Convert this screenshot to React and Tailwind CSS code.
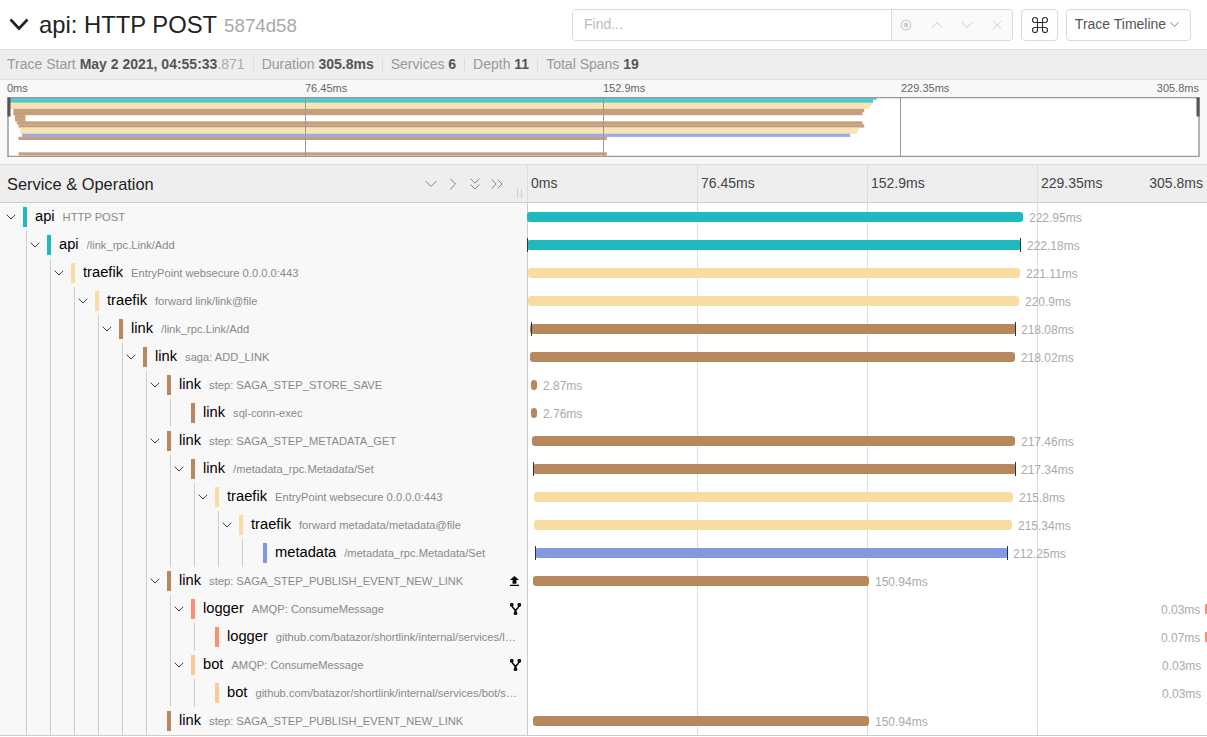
import React from 'react';
import { ChevronDown, ChevronUp, ChevronRight, ChevronsDown, ChevronsRight, Command, X } from 'lucide-react';

const TEAL = '#1fb9bf';
const BEIGE = '#f8dca1';
const BROWN = '#b7885e';
const BLUE = '#8199de';
const ORANGE = '#f99170';
const PEACH = '#fdc993';

const rows = [
  { d: 0, name: 'api', op: 'HTTP POST', color: TEAL, s: 527, e: 1023, label: '222.95ms', kids: true },
  { d: 1, name: 'api', op: '/link_rpc.Link/Add', color: TEAL, s: 527, e: 1021, label: '222.18ms', kids: true, marks: true },
  { d: 2, name: 'traefik', op: 'EntryPoint websecure 0.0.0.0:443', color: BEIGE, s: 528, e: 1020, label: '221.11ms', kids: true },
  { d: 3, name: 'traefik', op: 'forward link/link@file', color: BEIGE, s: 528, e: 1019, label: '220.9ms', kids: true },
  { d: 4, name: 'link', op: '/link_rpc.Link/Add', color: BROWN, s: 530, e: 1016, label: '218.08ms', kids: true, marks: true, inset: true, tight: true },
  { d: 5, name: 'link', op: 'saga: ADD_LINK', color: BROWN, s: 530, e: 1015, label: '218.02ms', kids: true },
  { d: 6, name: 'link', op: 'step: SAGA_STEP_STORE_SAVE', color: BROWN, s: 531, e: 537, label: '2.87ms', kids: true },
  { d: 7, name: 'link', op: 'sql-conn-exec', color: BROWN, s: 531, e: 537, label: '2.76ms' },
  { d: 6, name: 'link', op: 'step: SAGA_STEP_METADATA_GET', color: BROWN, s: 532, e: 1015, label: '217.46ms', kids: true },
  { d: 7, name: 'link', op: '/metadata_rpc.Metadata/Set', color: BROWN, s: 533, e: 1016, label: '217.34ms', kids: true, marks: true, tight: true },
  { d: 8, name: 'traefik', op: 'EntryPoint websecure 0.0.0.0:443', color: BEIGE, s: 534, e: 1013, label: '215.8ms', kids: true },
  { d: 9, name: 'traefik', op: 'forward metadata/metadata@file', color: BEIGE, s: 534, e: 1012, label: '215.34ms', kids: true },
  { d: 10, name: 'metadata', op: '/metadata_rpc.Metadata/Set', color: BLUE, s: 535, e: 1008, label: '212.25ms', marks: true, tight: true },
  { d: 6, name: 'link', op: 'step: SAGA_STEP_PUBLISH_EVENT_NEW_LINK', color: BROWN, s: 533, e: 869, label: '150.94ms', kids: true, icon: 'up' },
  { d: 7, name: 'logger', op: 'AMQP: ConsumeMessage', color: ORANGE, s: 1205, e: 1207, label: '0.03ms', left: true, kids: true, icon: 'fork' },
  { d: 8, name: 'logger', op: 'github.com/batazor/shortlink/internal/services/l…', color: ORANGE, s: 1205, e: 1207, label: '0.07ms', left: true },
  { d: 7, name: 'bot', op: 'AMQP: ConsumeMessage', color: PEACH, s: 1206, e: 1207, label: '0.03ms', left: true, kids: true, icon: 'fork', nobar: true },
  { d: 8, name: 'bot', op: 'github.com/batazor/shortlink/internal/services/bot/s…', color: PEACH, s: 1206, e: 1207, label: '0.03ms', left: true, nobar: true },
  { d: 6, name: 'link', op: 'step: SAGA_STEP_PUBLISH_EVENT_NEW_LINK', color: BROWN, s: 533, e: 869, label: '150.94ms' },
];

const miniX = (x) => 8 + (x - 527) * 1.751;

function Minimap() {
  return (
    <svg width="1193" height="60" className="block" viewBox="7 96.5 1193 60">
      <defs>
        <clipPath id="mini"><rect x="8" y="97" width="1191" height="59" /></clipPath>
      </defs>
      <rect x="8" y="97" width="1191" height="59" fill="#fff" />
      <g clipPath="url(#mini)">
        {rows.map((r, i) => (
          <rect key={i} x={miniX(r.s)} y={96 + i * 3.1} width={miniX(r.e) - miniX(r.s)} height="3.2" fill={r.color} opacity={r.left ? 0 : 0.8} />
        ))}
      </g>
      <path d="M305.5 97V156M603.5 97V156M900.5 97V156" stroke="#999" />
      <rect x="8" y="97" width="1191" height="59" fill="none" stroke="#999" strokeWidth="1.5" />
      <rect x="7.5" y="97" width="3" height="19" fill="#555" />
      <rect x="1196.5" y="97" width="3" height="19" fill="#555" />
    </svg>
  );
}

function Fork() {
  return (
    <svg width="11" height="12" viewBox="0 0 11 12" fill="none" stroke="#000" strokeWidth="1.5">
      <circle cx="1.7" cy="1.8" r="1.1" />
      <circle cx="9.3" cy="1.8" r="1.1" />
      <circle cx="5.5" cy="10.2" r="1.1" />
      <path d="M2.2 3C2.6 6 5.5 5.5 5.5 9M8.8 3C8.4 6 5.5 5.5 5.5 9" />
    </svg>
  );
}

function Upload() {
  return (
    <svg width="9" height="10" viewBox="5 3 14 17" fill="#000" preserveAspectRatio="none">
      <path d="M9 16h6v-6h4l-7-7-7 7h4zm-4 2h14v2H5z" />
    </svg>
  );
}

function Row({ row }) {
  const width = row.e - row.s;
  return (
    <div className="flex h-7">
      <div className="flex h-full w-[528px] flex-none items-center border-r border-[#ccc] bg-[#f8f8f8] pl-[3px] pr-[6px]">
        {Array.from({ length: row.d }).map((_, k) => (
          <div key={k} className="h-full w-6 flex-none border-r border-[#ccc]" />
        ))}
        <div className="flex w-[20px] flex-none items-center">
          {row.kids && <ChevronDown size={16} strokeWidth={1.3} color="#222" />}
        </div>
        <div className="h-5 w-1 flex-none" style={{ backgroundColor: row.color }} />
        <span className="-mt-[2px] ml-2 flex-none text-[14.7px] text-[#000]">{row.name}</span>
        <span className="ml-2 min-w-0 flex-1 overflow-hidden whitespace-nowrap text-[11.17px] text-[#888]">{row.op}</span>
        {row.icon === 'up' && <div className="ml-1 mr-[2px] flex-none"><Upload /></div>}
        {row.icon === 'fork' && <div className="ml-1 flex-none"><Fork /></div>}
      </div>
      <div className="flex h-full min-w-0 flex-1 items-center">
        {row.left ? (
          <div className="flex items-center" style={{ marginLeft: row.s - 528 - 44 }}>
            <span className="mt-[2px] w-[39px] flex-none text-[12px] text-[#aaa]">{row.label}</span>
            <div className="ml-[5px] h-2.5 flex-none" style={{ width, backgroundColor: row.nobar ? 'transparent' : row.color }} />
          </div>
        ) : (
          <div className="flex items-center" style={{ marginLeft: row.s - 528 }}>
            <div className="relative h-2.5 flex-none rounded-[3px]" style={{ width, backgroundColor: row.color }}>
              {row.marks && <div className={row.inset ? 'absolute -top-[2px] left-px h-[14px] w-px bg-[#333]' : 'absolute -top-[2px] left-0 h-[14px] w-px bg-[#333]'} />}
              {row.marks && <div className="absolute -top-[2px] right-0 h-[14px] w-px bg-[#333]" />}
            </div>
            <span className={row.tight ? 'ml-[5px] mt-[2px] flex-none text-[12px] text-[#aaa]' : 'ml-[6px] mt-[2px] flex-none text-[12px] text-[#aaa]'}>{row.label}</span>
          </div>
        )}
      </div>
    </div>
  );
}

function Stat({ k, children }) {
  return (
    <>
      <div className="mx-[8px] h-[14px] w-px bg-[#ddd]" />
      <span className="text-[#999]">{k} <b className="font-bold text-[#555]">{children}</b></span>
    </>
  );
}

export default function App() {
  return (
    <div className="h-[737px] w-[1207px] overflow-hidden bg-white font-['Liberation_Sans',Arial,sans-serif]">
      <header className="flex h-[49px] items-center pl-[9px] pr-4">
        <svg width="20" height="13" viewBox="0 0 20 13" fill="none" stroke="#222" strokeWidth="2.6">
          <path d="M1.5 1.5L10 10.5L18.5 1.5" />
        </svg>
        <h1 className="ml-[10px] text-[23.8px] font-normal leading-none text-[#222]">api: HTTP POST</h1>
        <span className="ml-[7px] mt-[3px] text-[18.7px] leading-none text-[#aaa]">5874d58</span>
        <div className="ml-auto flex items-center">
          <div className="flex h-[32px] w-[441px] overflow-hidden rounded border border-[#d9d9d9]">
            <div className="flex w-[319px] items-center border-r border-[#d9d9d9] bg-white pl-[11px] text-[14px] text-[#bbb]">Find...</div>
            <div className="flex flex-1 items-center bg-[#fafafa] pl-[8px] text-[#ccc]">
              <svg width="12" height="14" viewBox="0 0 12 14" fill="none" stroke="#ccc"><circle cx="6" cy="7" r="4.8" strokeWidth="1.2" /><circle cx="6" cy="7" r="2" fill="#ccc" /></svg>
              <ChevronUp size={20} strokeWidth={1.2} className="ml-[15px]" />
              <ChevronDown size={20} strokeWidth={1.2} className="ml-[10px]" />
              <X size={16} strokeWidth={1.2} className="ml-[12px]" />
            </div>
          </div>
          <div className="ml-2 flex h-[32px] w-[37px] items-center justify-center rounded border border-[#d9d9d9]">
            <Command size={20} strokeWidth={1.4} color="#333" />
          </div>
          <div className="ml-2 flex h-[32px] w-[125px] items-center justify-center gap-[1px] rounded border border-[#d9d9d9] text-[14px] text-[#555]">
            Trace Timeline <ChevronDown size={15} strokeWidth={1.2} />
          </div>
        </div>
      </header>

      <div className="flex h-[31px] items-center border-y border-[#e0e0e0] bg-[#eee] pl-[7px] text-[14px]">
        <span className="text-[#999]">Trace Start <b className="font-bold text-[#555]">May 2 2021, 04:55:33</b><span className="text-[#aaa]">.871</span></span>
        <Stat k="Duration">305.8ms</Stat>
        <Stat k="Services">6</Stat>
        <Stat k="Depth">11</Stat>
        <Stat k="Total Spans">19</Stat>
      </div>

      <div className="h-[85px] border-b border-[#ddd] bg-[#f8f8f8] pl-[7px] pr-[7px]">
        <div className="flex h-[17px] items-center justify-between text-[11px] text-[#666]">
          <span className="w-[298px]">0ms</span>
          <span className="w-[298px]">76.45ms</span>
          <span className="w-[298px]">152.9ms</span>
          <span className="flex-1">229.35ms</span>
          <span className="pr-px">305.8ms</span>
        </div>
        <Minimap />
      </div>

      <div className="relative">
        <div className="flex h-[38px] border-b border-[#ccc] bg-[#eee]">
          <div className="relative flex w-[528px] flex-none items-center border-r border-[#ddd] pl-[7px]">
            <span className="mt-[2px] flex-none text-[16.4px] text-[#222]">Service &amp; Operation</span>
            <div className="ml-auto mr-[20px] flex items-center gap-[2px] text-[#777]">
              <ChevronDown size={20} strokeWidth={1.1} />
              <ChevronRight size={20} strokeWidth={1.1} />
              <ChevronsDown size={20} strokeWidth={1.1} />
              <ChevronsRight size={20} strokeWidth={1.1} />
            </div>
            <div className="absolute bottom-[4px] left-[517px] h-[9px] w-[5px] border-x border-[#ccc]" />
          </div>
          <div className="flex flex-1 items-center pl-[3px] text-[14px] text-[#444]">
            <span className="w-[170px]">0ms</span>
            <span className="w-[170px]">76.45ms</span>
            <span className="w-[170px]">152.9ms</span>
            <span className="flex-1">229.35ms</span>
            <span className="pr-1">305.8ms</span>
          </div>
        </div>
        {/* tick lines run behind the bars */}
        <div className="pointer-events-none absolute left-[697px] top-0 h-[570px] w-px bg-[#ddd]" />
        <div className="pointer-events-none absolute left-[867px] top-0 h-[570px] w-px bg-[#ddd]" />
        <div className="pointer-events-none absolute left-[1037px] top-0 h-[570px] w-px bg-[#ddd]" />
        <div className="relative z-10 border-b border-[#ccc]">
          {rows.map((r, i) => <Row key={i} row={r} />)}
        </div>
      </div>
    </div>
  );
}
